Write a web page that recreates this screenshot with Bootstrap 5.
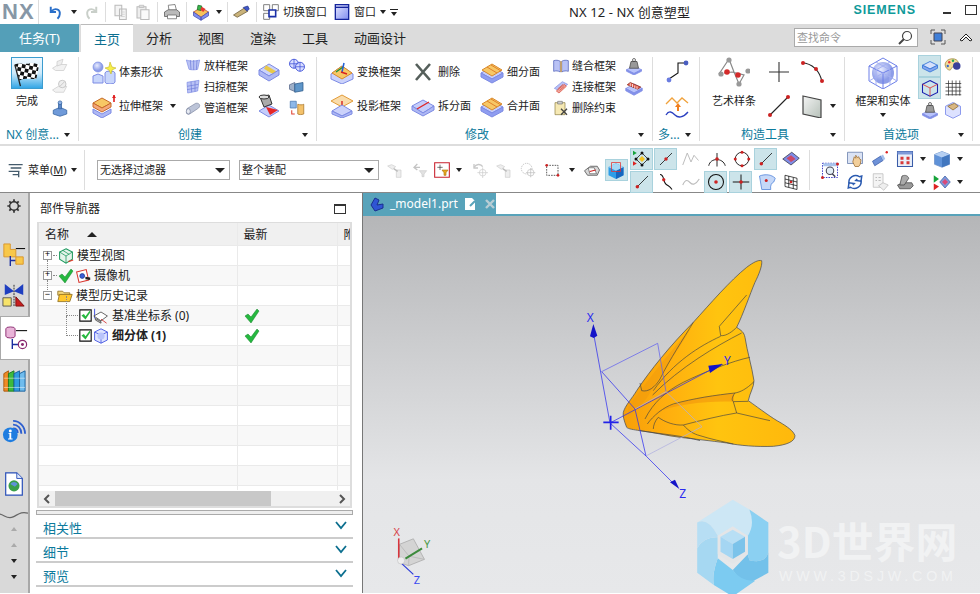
<!DOCTYPE html>
<html lang="zh-CN">
<head>
<meta charset="UTF-8">
<meta name="viewport" content="width=device-width, initial-scale=1.0">
<title>NX 12 - NX 创意塑型</title>
<link rel="stylesheet" href="https://cdn.jsdelivr.net/npm/bootstrap@5.3.0/dist/css/bootstrap.min.css">
<style>
  html, body { height: 594px; overflow: hidden; }
  body { width: 980px; background: #fff; color: #222; font: 11px/16px "Noto Sans", "Noto Sans CJK SC", sans-serif; }
  svg { display: block; flex: none; overflow: visible; }
  .sprite { position: absolute; }
  .ic { width: 24px; height: 24px; }
  .ic-m { width: 18px; height: 18px; }
  .ic-s { width: 16px; height: 16px; }
  .ic-l { width: 32px; height: 32px; }
  .tri { width: 0; height: 0; flex: none; border: 3.5px solid transparent; border-top: 4px solid #222; border-bottom: 0; }
  .tri-up { transform: rotate(180deg); }
  .tri-dim { border-top-color: #aaa; }
  .tri-wide { border-width: 5px 5px 0; }

  /* title bar */
  .title-bar { height: 24px; }
  .nx-logo { width: 39px; padding-left: 2px; font: 700 22px/24px "Liberation Sans", sans-serif; color: #8797a6; letter-spacing: 1px; border-right: 1px solid #ddd; flex: none; }
  .qat { display: grid; padding-left: 4px; grid-template-columns: 26px 10px 23px 6px 26px 18px 10px 20px 8px 22px 14px 2px 26px 4px; align-items: center; justify-items: center; height: 24px; }
  .qat-sep { width: 1px; height: 20px; background: #ddd; }
  .qat-txt { display: flex; align-items: center; gap: 4px; font-size: 11px; color: #222; }
  .qt-a { margin-left: 5px; } .qt-b { margin-left: 7px; }
  .win-title { margin-left: 171px; font-size: 13px; line-height: 24px; letter-spacing: .1px; }
  .siemens { font: 700 12.5px/24px "Liberation Sans", sans-serif; color: #0f9a9a; letter-spacing: .9px; margin-top: -2px; }
  .win-min { width: 8px; height: 2px; background: #333; margin: 12px 14px 0 27px; }
  .win-max { width: 12px; height: 10px; border: 1px solid #333; margin: 5px 3px 0 0; }

  /* tabs */
  .tab-row { height: 28px; background: #dcdcdc; }
  .tab-task { width: 79px; background: #549fb8; color: #fff; text-align: center; font-size: 13px; line-height: 28px; }
  .tab-on { width: 52px; margin-left: 2px; background: #fff; color: #0c6f8f; text-align: center; font-size: 13px; line-height: 28px; border-top: 1px solid #bbb; }
  .tab-plain { margin-left: 26px; font-size: 13px; line-height: 28px; color: #222; }
  .tab-first { margin-left: 13px; }
  .find-box { width: 124px; height: 19px; margin: 4px 12px 0 0; padding-left: 2px; background: #fff; border: 1px solid #aaa; color: #999; font-size: 11px; line-height: 17px; }
  .tab-ico { margin: 5px 12px 0 0; }
  .tab-ico-end { margin: 5px 6px 0 0; }

  /* ribbon */
  .ribbon { height: 94px; border-bottom: 2px solid #ddd; }
  .rb-sep { width: 1px; height: 84px; margin-top: 5px; background: #ddd; flex: none; }
  .rb-grp { flex: none; display: flex; flex-direction: column; }
  .rb-body { display: grid; height: 74px; padding-top: 3px; }
  .rb-col { display: flex; flex-direction: column; }
  .rb-row3 { height: 21px; display: flex; align-items: center; gap: 3px; white-space: nowrap; }
  .rb-row2 { height: 34px; display: flex; align-items: center; gap: 3px; white-space: nowrap; }
  .rb-big { display: flex; flex-direction: column; align-items: center; padding-top: 2px; white-space: nowrap; }
  .rb-big span { margin-top: 4px; }
  .rb-label { height: 18px; margin-top: 1px; display: flex; align-items: center; padding-right: 8px; color: #0c7a9c; font-size: 12px; }
  .rb-label .tri { margin-left: auto; }
  .flag-btn { background: linear-gradient(#eef8ff, #cfeafa 50%, #35a7e6); border: 1px solid #3c9ccf; }

  .g-nx { width: 78px; } .g-nx .rb-body { grid-template-columns: 48px 18px; padding-left: 3px; } .g-nx .rb-label { padding-left: 6px; }
  .g-cr { width: 237px; } .g-cr .rb-body { grid-template-columns: 93px 72px 31px 18px; padding-left: 13px; } .g-cr .rb-label { padding-left: 99px; }
  .g-md { width: 335px; } .g-md .rb-body { grid-template-columns: 81px 69px 73px 72px 18px; padding-left: 13px; } .g-md .rb-label { padding-left: 148px; }
  .g-mu { width: 46px; } .g-mu .rb-body { grid-template-columns: 24px; padding-left: 12px; } .g-mu .rb-label { padding-left: 5px; }
  .g-ct { width: 144px; } .g-ct .rb-body { grid-template-columns: 66px 24px 55px; padding-left: 1px; } .g-ct .rb-label { padding-left: 41px; }
  .g-ct .rb-shift { padding-left: 9px; gap: 6px; }
  .g-pr { width: 127px; } .g-pr .rb-body { grid-template-columns: 70px 23px 21px; padding-left: 3px; } .g-pr .rb-label { padding-left: 38px; }
  .g-pr .rb-big .tri { margin-top: 4px; }
  .g-pr .rb-icons { padding-left: 3px; }
  .rb-toggle { height: 22px; display: flex; align-items: center; justify-content: center; }
  .rb-toggle.on { background: #cce4ea; border: 1px solid #a9d2dd; }

  /* selection bar */
  .sel-bar { height: 47px; border-bottom: 1px solid #888; padding: 2px 0 0 8px; }
  .menu-btn { width: 72px; display: flex; align-items: center; gap: 4px; font-size: 11px; white-space: nowrap; }
  .sel-sep { width: 1px; height: 40px; background: #ddd; flex: none; }
  .sep-a { margin-left: 4px; }
  .sep-b { margin: 0 3px 0 6px; }
  .zoom-ic { margin: 0 3px 0 8px; }
  .fake-select { height: 20px; display: flex; align-items: center; justify-content: space-between; padding: 0 4px 0 2px; border: 1px solid #aaa; font-size: 11px; }
  .fs-a { width: 133px; margin-left: 12px; } .fs-b { width: 140px; margin-left: 9px; }
  .tb-strip { display: grid; margin-left: 4px; grid-template-columns: 24px 26px 17px 18px 24px 23px 26px 22px 17px 24px 24px; align-items: center; justify-items: center; }
  .tb-two { display: grid; margin-left: 2px; grid-template-columns: 24px 24px 26px 25px 25px 25px 24px; grid-auto-rows: 22px; row-gap: 1px; align-self: flex-start; }
  .tb-two-b { grid-template-columns: 25px 26px 24px 12px 26px 10px; margin-left: 0; }
  .tb-cell { display: flex; align-items: center; justify-content: center; }
  .tb-cell.on, .tb-strip .on { background: #cce4ea; border: 1px solid #a9d2dd; width: 23px; height: 22px; }

  /* work area */
  .work { height: 400px; }
  .side-rail { width: 30px; flex: none; background: #d9d9d9; border-right: 2px solid #a8a8a8; }
  .rail-item { height: 40px; display: flex; align-items: center; justify-content: center; }
  .rail-item.on { height: 44px; margin-top: 1px; background: #fff; border: 1px solid #aaa; border-right: 0; margin-right: -2px; }
  .rail-gear { height: 26px; }
  .rail-h42 { height: 42px; }
  .rail-h44 { height: 44px; }
  .rail-wave { height: 12px; margin-top: 3px; }
  .rail-arrow { height: 16px; display: flex; align-items: center; justify-content: center; }

  .nav-panel { width: 332px; flex: none; padding: 0 9px 0 6px; }
  .nav-title { height: 29px; display: flex; align-items: center; justify-content: space-between; padding: 2px 7px 0 4px; font-size: 12px; }
  .max-box { width: 12px; height: 10px; border: 1px solid #333; border-top-width: 2px; }
  .tree-wrap { height: 286px; border: 2px solid #ddd; border-top-width: 1px; margin: 0 1px; overflow: hidden; }
  .tree-scroll { height: 267px; margin-bottom: 1px; overflow: hidden; }
  .tree-tbl { width: 338px; margin: 0; table-layout: fixed; border-collapse: collapse; font-size: 12px; }
  .tree-tbl col:nth-child(1) { width: 198px; } .tree-tbl col:nth-child(2) { width: 100px; } .tree-tbl col:nth-child(3) { width: 40px; }
  .tree-tbl th, .tree-tbl td { height: 20px; padding: 0 0 0 6px; border: 0; border-right: 1px solid #eaeaea; border-bottom: 1px solid #eaeaea; vertical-align: middle; font-weight: 400; white-space: nowrap; background: transparent; box-shadow: none; overflow: hidden; color: #222; }
  .tree-tbl td:first-child { padding-left: 4px; overflow: visible; }
  .tree-tbl th { background: #f0f0f0; height: 21px; line-height: 21px; padding-top: 1px; }
  .tree-tbl tr.alt td { background: #f8f8f8; }
  .tree-cell { display: flex; align-items: center; gap: 1px; height: 19px; }
  .tree-cell svg:last-of-type { margin-right: 2px; }
  .tw-box { position: relative; width: 9px; height: 9px; border: 1px solid #999; background: #fff; display: flex; align-items: center; justify-content: center; font: 9px/7px "Liberation Mono", monospace; color: #000; flex: none; }
  .tw-link::after { content: ""; position: absolute; left: 3px; top: 8px; height: 12px; border-left: 1px dotted #888; }
  .dots { position: relative; width: 4px; border-top: 1px dotted #888; flex: none; }
  .dots-l { width: 12px; }
  .dots-l::before { content: ""; position: absolute; left: 0; bottom: 0; height: 20px; border-left: 1px dotted #888; }
  .ind-2 { margin-left: 23px; }
  .chk-box { width: 13px; height: 13px; }
  .sort-gap { gap: 18px; }
  .tree-hsb { height: 15px; background: #f0f0f0; display: flex; align-items: center; padding: 0 4px; }
  .hsb-thumb { width: 216px; height: 15px; background: #c8c8c8; margin: 0 auto 0 5px; }
  .splitter { height: 5px; margin-top: 2px; border: 1px solid #aaa; background: #eee; }
  .acc-row { height: 24px; display: flex; align-items: flex-end; justify-content: space-between; padding: 0 6px 0 7px; border-bottom: 2px solid #ccc; color: #0c7a9c; font-size: 13px; line-height: 18px; }
  .acc-row svg { margin-bottom: 8px; }

  .view-area { width: 618px; flex: none; border-left: 1px solid #777; }
  .doc-tabs { height: 23px; border-bottom: 2px solid #58a3ba; }
  .doc-tab { width: 133px; height: 21px; background: #58a3ba; color: #fff; display: flex; align-items: center; padding-left: 6px; font: 12px/21px "Noto Sans", sans-serif; }
  .doc-ic { margin-right: 5px; }
  .canvas-svg { width: 617px; height: 377px; }
</style>
</head>
<body>

<!-- icon set -->
<svg class="sprite" width="0" height="0">
  <defs>
    <linearGradient id="gCube" x1="0" y1="0" x2="1" y2="1"><stop offset="0" stop-color="#e4e6ff"/><stop offset="1" stop-color="#7f8df0"/></linearGradient>
    <linearGradient id="gGray" x1="0" y1="0" x2="1" y2="1"><stop offset="0" stop-color="#f4f4f4"/><stop offset="1" stop-color="#b5c0b8"/></linearGradient>
    <radialGradient id="gBall" cx=".4" cy=".35"><stop offset="0" stop-color="#e8ecff"/><stop offset="1" stop-color="#8d9de8"/></radialGradient>
    <linearGradient id="gBody" x1="1" y1="0" x2="0" y2="0"><stop offset="0" stop-color="#ffb80c"/><stop offset=".45" stop-color="#ffc40f"/><stop offset=".75" stop-color="#ffae0e"/><stop offset="1" stop-color="#f79f08"/></linearGradient>
    <linearGradient id="gBack" x1="0" y1="0" x2="0" y2="1"><stop offset="0" stop-color="#b5b6b8"/><stop offset=".7" stop-color="#e4e5e7"/><stop offset="1" stop-color="#e7e8ea"/></linearGradient>
    <pattern id="chk" width="8" height="8" patternUnits="userSpaceOnUse" patternTransform="rotate(12)"><rect width="8" height="8" fill="#fff"/><rect width="4" height="4" fill="#111"/><rect x="4" y="4" width="4" height="4" fill="#111"/></pattern>
  </defs>
  <symbol id="slab-y" viewBox="0 0 24 24"><path d="M1 13l11-6 11 6-11 6z" fill="#c5cdfb" stroke="#7d8be4"/><path d="M1 13v4l11 6 11-6v-4l-11 6z" fill="#8f9df0" stroke="#7d8be4"/><path d="M2 10l10-6 10 6-10 6z" fill="#f7c765" stroke="#d98a2b"/><path d="M7 7l10 6M11 5l10 6" stroke="#e0812a"/></symbol>
  <symbol id="undo" viewBox="0 0 24 24"><path d="M5 5v7h7M6 11c4-5 12-3 11 4 0 2-1 4-3 6" fill="none" stroke="#2a6fc9" stroke-width="2.6"/></symbol>
  <symbol id="redo" viewBox="0 0 24 24"><path d="M19 5v7h-7M18 11c-4-5-12-3-11 4 0 2 1 4 3 6" fill="none" stroke="#c9cfc9" stroke-width="2.6"/></symbol>
  <symbol id="copy-g" viewBox="0 0 24 24"><path d="M4 3h9v14H4zM10 8h9v14h-9z" fill="#f4f4f4" stroke="#bbb" stroke-width="1.4"/><path d="M12 12h5M12 15h5M12 18h5" stroke="#ccc"/></symbol>
  <symbol id="paste-g" viewBox="0 0 24 24"><path d="M4 5h12v15H4z" fill="#eee" stroke="#bbb" stroke-width="1.4"/><path d="M9 9h11v13H9z" fill="#fafafa" stroke="#bbb" stroke-width="1.4"/><path d="M7 3h6v3H7z" fill="#ddd" stroke="#bbb"/></symbol>
  <symbol id="print" viewBox="0 0 24 24"><path d="M7 3l9-1 2 8H8z" fill="#fff" stroke="#666"/><path d="M2 12l5-3h11l4 3v6H2z" fill="#bbb" stroke="#555"/><path d="M6 16h12v5H6z" fill="#fff" stroke="#666"/></symbol>
  <symbol id="paintbox" viewBox="0 0 24 24"><path d="M2 12l10-6 10 6-10 7z" fill="#f6c25c" stroke="#b5462a"/><path d="M2 12v5l10 6v-4zM22 12v5l-10 6v-4z" fill="#7f8df0" stroke="#444fb0"/><path d="M8 3l5 1-1 6-5-1z" fill="#39b54a" stroke="#1c6f2a"/><path d="M13 5l5 3-3 4-4-3z" fill="#e53935"/></symbol>
  <symbol id="wand" viewBox="0 0 24 24"><path d="M2 16l14-9 5 4-14 8z" fill="#c9b27a" stroke="#6a5a36"/><path d="M15 6l6-2 2 4-3 3z" fill="#3f57c9" stroke="#2b3a8a"/></symbol>
  <symbol id="switch-w" viewBox="0 0 24 24"><path d="M1 1h9v9H1zM14 1h9v9h-9zM1 14h9v9H1z" fill="#fff" stroke="#777" stroke-width="1.4"/><path d="M9 9h10v10H9z" fill="#fff" stroke="#1a2fa8" stroke-width="2.4"/></symbol>
  <symbol id="win-w" viewBox="0 0 24 24"><path d="M2 1h20v22H2z" fill="url(#gCube)" stroke="#14249c" stroke-width="2"/><path d="M2 5h20" stroke="#14249c" stroke-width="2"/></symbol>
  <symbol id="slab-g1" viewBox="0 0 24 24"><path d="M2 15l8-5h11l-4 8H6z" fill="#f2f2f2" stroke="#ccc"/><path d="M8 6l8-3-2 7-6 2z" fill="#eee" stroke="#ccc"/></symbol>
  <symbol id="slab-g2" viewBox="0 0 24 24"><path d="M2 16l8-5h11l-4 8H6z" fill="#f2f2f2" stroke="#ccc"/><circle cx="15" cy="8" r="5" fill="#eee" stroke="#bbb"/><path d="M12 11l6-6" stroke="#bbb"/></symbol>
  <symbol id="slab-b" viewBox="0 0 24 24"><path d="M3 15l9-4 9 4v5l-9 3-9-3z" fill="#6f9ad9" stroke="#33629f"/><path d="M10 6h4v7h-4z" fill="#5b87c7" stroke="#33629f"/><circle cx="12" cy="5" r="2.5" fill="#8cb1e6" stroke="#33629f"/></symbol>
  <symbol id="voxel" viewBox="0 0 24 24"><circle cx="6" cy="7" r="5" fill="url(#gBall)" stroke="#6c7fe0" stroke-width=".6"/><path d="M1 16l5-2 5 2v7H1z" fill="#c8d6fb" stroke="#7d8be4"/><path d="M13 13a5 2 0 0 1 10 0v9a5 2 0 0 1-10 0z" fill="#c8d6fb" stroke="#7d8be4"/><path d="M13 8l4-1 1-5 2 5 4 1-4 2-1 4-2-4z" fill="#f7ef4a" stroke="#c4b520" stroke-width=".6"/></symbol>
  <symbol id="extrude" viewBox="0 0 24 24"><path d="M1 9l9-5 9 5-9 5z" fill="#f7c765" stroke="#c76a2a"/><path d="M1 9v4l9 5 9-5V9l-9 5z" fill="#f4a77a" stroke="#c76a2a"/><path d="M1 15l9 5 9-5v4l-9 5-9-5z" fill="#aeb8f4" stroke="#7d8be4"/><path d="M22 1v7" stroke="#e02020" stroke-width="1.6"/><path d="M20 4l2-3 2 3z" fill="#e02020"/></symbol>
  <symbol id="loft" viewBox="0 0 24 24"><path d="M2 3c4 2 14 2 20 0l-3 14c-4 1-9 1-13 0z" fill="#b9c2f5" stroke="#7d8be4"/><path d="M8 3l1 15M13 3v15M18 3l-1 15" stroke="#6c7ad8"/></symbol>
  <symbol id="sweep" viewBox="0 0 24 24"><path d="M3 5l18-3-2 16-15 3z" fill="#b9c2f5" stroke="#7d8be4"/><path d="M3 11l17-3M3 16l16-3M9 4l1 16M15 3v16" stroke="#6c7ad8"/></symbol>
  <symbol id="pipe" viewBox="0 0 24 24"><path d="M3 13l13-8c3-1 6 1 6 3s-1 4-3 5L7 21c-3 1-5 0-5-3z" fill="#bcc4d8" stroke="#7b859f"/><ellipse cx="5" cy="17" rx="3" ry="4" fill="#e8ecf4" stroke="#7b859f"/></symbol>
  <symbol id="panels" viewBox="0 0 24 24"><path d="M2 10l10-6 10 6-10 6z" fill="#cbd2fb" stroke="#7d8be4"/><path d="M8 7l10 6" stroke="#e9c94a" stroke-width="4"/><path d="M2 10v5l10 6 10-6v-5l-10 6z" fill="#aeb8f4" stroke="#7d8be4"/></symbol>
  <symbol id="pour" viewBox="0 0 24 24"><path d="M2 17l10-6 10 6-10 6z" fill="#c5cdfb" stroke="#7d8be4"/><path d="M9 13l12 3-8 5z" fill="#e62727"/><path d="M3 3l9-2 3 9-8 3z" fill="#aaa" stroke="#333"/><ellipse cx="7" cy="3" rx="5" ry="2" fill="#ddd" stroke="#333"/></symbol>
  <symbol id="mesh-b" viewBox="0 0 24 24"><circle cx="8" cy="9" r="6" fill="#d8ddff" stroke="#3f51d8" stroke-width="1.2"/><circle cx="16" cy="13" r="6" fill="#d8ddff" stroke="#3f51d8" stroke-width="1.2"/><path d="M2 9h12M8 3v12M10 13h12M16 7v12" stroke="#3f51d8"/></symbol>
  <symbol id="mirror-b" viewBox="0 0 24 24"><path d="M2 9l7-3v12l-7-3z" fill="#9fb0c8" stroke="#56678a"/><path d="M9 8l11-2v11l-11 2z" fill="#5f96c9" stroke="#2c5a8a"/></symbol>
  <symbol id="mirror-o" viewBox="0 0 24 24"><path d="M3 3h8v9H3z" fill="#8eb8e8" stroke="#4878b0"/><path d="M13 7c3 1 6 1 8 0v13c-3 1-6 1-8 0z" fill="#f4c26b" stroke="#a87426"/><path d="M5 15v5h4" fill="none" stroke="#e04030" stroke-width="1.4"/></symbol>
  <symbol id="transform" viewBox="0 0 24 24"><path d="M1 14l11-8 11 8v5l-11 5-11-5z" fill="#cbd2fb" stroke="#7d8be4"/><path d="M2 13l10-7 10 7-10 6z" fill="#f7c765" stroke="#d98a2b"/><path d="M6 12l7-5" stroke="#1f8f3a" stroke-width="1.5"/><path d="M12 12l2-9" stroke="#1f5fd8" stroke-width="1.5"/><path d="M11 12l6 2" stroke="#d82020" stroke-width="1.5"/></symbol>
  <symbol id="project" viewBox="0 0 24 24"><path d="M1 7l11-6 11 6-11 6z" fill="#f9dcab" stroke="#e29b38"/><path d="M12 7v9" stroke="#d82020" stroke-width="1.4"/><path d="M2 17l10-6 10 6-10 5z" fill="#cbd2fb" stroke="#7d8be4"/><path d="M2 17v3l10 4 10-4v-3l-10 5z" fill="#aeb8f4" stroke="#7d8be4"/></symbol>
  <symbol id="xdel" viewBox="0 0 24 24"><path d="M5 4l14 16M19 4L5 20" stroke="#555f5b" stroke-width="2.6"/></symbol>
  <symbol id="split" viewBox="0 0 24 24"><path d="M1 12l11-6 11 6-11 7z" fill="#c5cdfb" stroke="#7d8be4"/><path d="M1 12v4l11 6 11-6v-4l-11 7z" fill="#aeb8f4" stroke="#7d8be4"/><path d="M6 15l12-7" stroke="#e02525" stroke-width="1.4"/></symbol>
  <symbol id="sew" viewBox="0 0 24 24"><path d="M1 4c3-1 7-1 10 1v16c-3-2-7-2-10-1zM23 4c-3-1-7-1-10 1v16c3-2 7-2 10-1z" fill="#b9c2f5" stroke="#3f51b0"/><path d="M11 5h2v16h-2z" fill="#d9a441"/></symbol>
  <symbol id="bridge" viewBox="0 0 24 24"><path d="M2 14L14 4l8 4-12 10z" fill="#b9c2f5" stroke="#7d8be4"/><path d="M5 18L17 8l3 3-11 10z" fill="#f0a39a" stroke="#d84a3a"/><path d="M7 15l8-7M10 17l7-6" stroke="#d84a3a"/></symbol>
  <symbol id="clipx" viewBox="0 0 24 24"><path d="M3 4h15v18H3z" fill="#f6e9b4" stroke="#8a7a3a"/><path d="M7 2h7v4H7z" fill="#ccc" stroke="#777"/><path d="M12 13l9 9M21 13l-9 9" stroke="#444" stroke-width="2"/></symbol>
  <symbol id="weight" viewBox="0 0 24 24"><path d="M2 17l10-5 10 5-10 5z" fill="#b8c3fb" stroke="#7d8be4"/><path d="M2 17v2l10 5 10-5v-2l-10 5z" fill="#8391ea" stroke="#7d8be4"/><path d="M8 6h8l2 9H6z" fill="#999" stroke="#444"/><circle cx="12" cy="4" r="2" fill="none" stroke="#444"/></symbol>
  <symbol id="blockred" viewBox="0 0 24 24"><path d="M1 14l11-6 11 6-11 6z" fill="#b8c3fb" stroke="#7d8be4"/><path d="M1 14v3l11 6 11-6v-3l-11 6z" fill="#8391ea" stroke="#7d8be4"/><path d="M3 9l14 6 4-3L7 6z" fill="#e25a4a" stroke="#8a2a20"/><path d="M7 7v4M10 8v4M13 10v4M16 11v4" stroke="#fff"/></symbol>
  <symbol id="bentline" viewBox="0 0 24 24"><path d="M4 19l9-6V3h8" fill="none" stroke="#111" stroke-width="1.1"/><circle cx="4" cy="20" r="2.4" fill="#6a7ce0"/><circle cx="21" cy="3" r="2.4" fill="#4a5ec0"/></symbol>
  <symbol id="offset" viewBox="0 0 24 24"><path d="M1 10l6-6 5 5 5-5 6 5" fill="none" stroke="#f0a23c" stroke-width="1.3"/><path d="M1 21c3-5 6-3 9 0s8 3 13-3" fill="none" stroke="#2a3fc0" stroke-width="1.3"/><path d="M12 17v-4h-2l3-4 3 4h-2v4z" fill="#f08020"/></symbol>
  <symbol id="artspline" viewBox="0 0 32 32"><path d="M1 17L11 2l5 13 5 12 5-9L14 15 6 16" fill="none" stroke="#888" stroke-width="1.2"/><g fill="#999"><circle cx="11" cy="3" r="2.6"/><circle cx="3" cy="17" r="2.6"/><circle cx="21" cy="27" r="2.6"/><circle cx="30" cy="14" r="2.6"/></g><circle cx="9" cy="15" r="2.8" fill="#d42b2b"/><circle cx="20" cy="18" r="2.8" fill="#d42b2b"/></symbol>
  <symbol id="plus-k" viewBox="0 0 24 24"><path d="M12 2v20M2 12h20" stroke="#333" stroke-width="1.1"/></symbol>
  <symbol id="arc-r" viewBox="0 0 24 24"><path d="M2 3c10 0 18 8 20 19" fill="none" stroke="#222" stroke-width="1.1"/><circle cx="3" cy="3" r="2" fill="#c22"/><circle cx="16" cy="9" r="2" fill="#c22"/><circle cx="22" cy="21" r="2" fill="#c22"/></symbol>
  <symbol id="line-r" viewBox="0 0 24 24"><path d="M3 21L21 3" stroke="#222" stroke-width="1.1"/><circle cx="3" cy="21" r="2" fill="#c22"/><circle cx="21" cy="3" r="2" fill="#c22"/></symbol>
  <symbol id="plane" viewBox="0 0 24 24"><path d="M3 2l18 4v18L3 20z" fill="url(#gGray)" stroke="#444" stroke-width="1.2"/></symbol>
  <symbol id="bigcube" viewBox="0 0 32 32"><circle cx="16" cy="16" r="11" fill="url(#gBall)"/><path d="M16 1l14 8v15l-14 8-14-8V9z" fill="none" stroke="#6c7fe8"/><path d="M2 9l14 7 14-7M16 16v16" stroke="#6c7fe8" fill="none"/><path d="M9 5l14 8v15M23 5L9 13v15M2 24l14-8 14 8" stroke="#a4b0f2" fill="none"/></symbol>
  <symbol id="tog1" viewBox="0 0 24 24"><path d="M2 11l10-5 10 5-10 5z" fill="#d6e0fb" stroke="#3a78d8" stroke-width="1.2"/><path d="M2 11v4l10 5 10-5v-4l-10 5z" fill="#86a7ef" stroke="#3a78d8" stroke-width="1.2"/></symbol>
  <symbol id="tog2" viewBox="0 0 24 24"><path d="M12 2l10 5v11l-10 5-10-5V7z" fill="none" stroke="#1a1fb0" stroke-width="1.4"/><path d="M2 7l10 5 10-5M12 12v11" fill="none" stroke="#e02020"/></symbol>
  <symbol id="palette" viewBox="0 0 24 24"><path d="M3 6c4-5 14-5 16 1s-4 5-7 6-2 6-6 4S0 10 3 6z" fill="#f2dc9a" stroke="#9a8036"/><circle cx="7" cy="7" r="1.6" fill="#e33"/><circle cx="12" cy="5" r="1.6" fill="#2a5"/><circle cx="5" cy="12" r="1.6" fill="#36c"/><circle cx="17" cy="12" r="5" fill="#3a3f9a"/></symbol>
  <symbol id="gridk" viewBox="0 0 24 24"><path d="M6 2v20M11 2v20M16 2v20M21 2v20M2 6h21M2 11h21M2 16h21M2 21h21" stroke="#333" stroke-width="1"/></symbol>
  <symbol id="wirebox" viewBox="0 0 24 24"><path d="M12 2l10 5v11l-10 5-10-5V7z" fill="#dde2ff" stroke="#6c7fe8"/><path d="M5 7l9-4 5 4-7 5z" fill="#d9b782" stroke="#8a6a30"/></symbol>
  <symbol id="menu-i" viewBox="0 0 24 24"><path d="M1 4h21M4 9h16M1 14h16M7 19h9" stroke="#445b6c" stroke-width="2"/><path d="M16 14v9" stroke="#445b6c" stroke-width="2"/></symbol>
  <symbol id="fil-ghost" viewBox="0 0 24 24"><path d="M3 8h9M8 3L3 8l5 4" fill="none" stroke="#c4c4c4" stroke-width="2"/><path d="M11 13h11l-4 5v4h-3v-4z" fill="#e2e2e2" stroke="#ccc"/></symbol>
  <symbol id="fil-red" viewBox="0 0 24 24"><path d="M1 1h22v22H1z" fill="#fff" stroke="#c8202c" stroke-width="1.6"/><path d="M9 4v8M5 8h8" stroke="#333"/><path d="M12 12h9l-3 4v4h-3v-4z" fill="#e8a820" stroke="#b07a10"/></symbol>
  <symbol id="rot-ghost" viewBox="0 0 24 24"><path d="M3 8c3-5 10-6 13-1" fill="none" stroke="#c8c8c8" stroke-width="2"/><path d="M3 3v6h6" fill="none" stroke="#c8c8c8" stroke-width="2"/><circle cx="16" cy="16" r="5" fill="none" stroke="#c8c8c8"/><path d="M16 8v16M8 16h16" stroke="#c8c8c8"/></symbol>
  <symbol id="link-ghost" viewBox="0 0 24 24"><path d="M1 6l6-2 6 3-5 4zM14 12h7v11h-7z" fill="#eee" stroke="#ccc"/><path d="M10 10l6 4" stroke="#bbb" stroke-width="2"/></symbol>
  <symbol id="hex-ghost" viewBox="0 0 24 24"><circle cx="10" cy="10" r="8" fill="none" stroke="#bbb" stroke-dasharray="2 1.4" stroke-width="1.3"/><circle cx="16" cy="16" r="5" fill="#fff" stroke="#bbb"/><path d="M16 9v14M9 16h14" stroke="#bbb"/></symbol>
  <symbol id="rect-dash" viewBox="0 0 24 24"><path d="M4 5h17v15H4z" fill="none" stroke="#333" stroke-dasharray="2.4 1.6" stroke-width="1.2"/><circle cx="4" cy="5" r="2" fill="#c22"/><circle cx="21" cy="20" r="2" fill="#c22"/></symbol>
  <symbol id="shell-g" viewBox="0 0 24 24"><path d="M2 13l8-6h9l3 5-3 7H6z" fill="#d8d8d8" stroke="#555" stroke-width="1.1"/><path d="M7 9h8l3 8H9z" fill="#fff" stroke="#666"/><path d="M9 14l8-2" stroke="#c22" stroke-width="1.4"/></symbol>
  <symbol id="cube-on" viewBox="0 0 24 24"><path d="M12 3l10 5v11l-10 5-10-5V8z" fill="#2d9de8"/><path d="M12 13l10-5v11l-10 5z" fill="#1766bf"/><path d="M2 8l10-5 10 5-10 5z" fill="#a5d8f6"/><path d="M6 2h12v12H6z" fill="none" stroke="#e23333"/></symbol>
  <symbol id="snap4" viewBox="0 0 24 24"><path d="M4 12l8-8 8 8-8 8z" fill="none" stroke="#222" stroke-width="1.1"/><path d="M8 12l4-4 4 4-4 4z" fill="#f2c220"/><g fill="#111"><circle cx="12" cy="4" r="2"/><circle cx="12" cy="20" r="2"/><circle cx="20" cy="12" r="2"/><circle cx="4" cy="12" r="2"/></g><path d="M0 1l5 3-5 3z" fill="#16a33a"/><path d="M0 15l5 3-5 3z" fill="#d22"/></symbol>
  <symbol id="line-m" viewBox="0 0 24 24"><path d="M3 21L21 3" stroke="#111" stroke-width="1.2"/><circle cx="12" cy="12" r="2.6" fill="#c22"/></symbol>
  <symbol id="line-e" viewBox="0 0 24 24"><path d="M3 21L21 3" stroke="#111" stroke-width="1.2"/><circle cx="5" cy="19" r="2.6" fill="#c22"/></symbol>
  <symbol id="poly-g" viewBox="0 0 24 24"><path d="M1 20L7 4l5 12 4-9 6 7" fill="none" stroke="#bbb" stroke-width="1.3"/></symbol>
  <symbol id="arc-top" viewBox="0 0 24 24"><path d="M1 21C3 10 20 10 23 21M12 4v18" fill="none" stroke="#111" stroke-width="1.2"/><circle cx="12" cy="12" r="2.4" fill="#c22"/></symbol>
  <symbol id="circ4" viewBox="0 0 24 24"><circle cx="12" cy="12" r="9" fill="none" stroke="#111" stroke-width="1.2"/><g fill="#c22"><circle cx="12" cy="3" r="2"/><circle cx="12" cy="21" r="2"/><circle cx="3" cy="12" r="2"/><circle cx="21" cy="12" r="2"/></g></symbol>
  <symbol id="surf-r" viewBox="0 0 24 24"><path d="M1 12L13 3l10 8-11 9z" fill="#7f8de8" stroke="#334"/><path d="M6 11l6-4 6 5-6 4z" fill="#c94a6a"/></symbol>
  <symbol id="scurve" viewBox="0 0 24 24"><path d="M4 2c6 0 4 10 8 13s5 2 8 7" fill="none" stroke="#111" stroke-width="1.4"/><circle cx="9" cy="9" r="2.2" fill="#c22"/></symbol>
  <symbol id="wave-g" viewBox="0 0 24 24"><path d="M1 16c4-9 7-6 10-3s7 3 12-5" fill="none" stroke="#bbb" stroke-width="1.5"/></symbol>
  <symbol id="circ-c" viewBox="0 0 24 24"><circle cx="12" cy="12" r="10" fill="none" stroke="#111" stroke-width="1.4"/><circle cx="12" cy="12" r="2.4" fill="#c22"/></symbol>
  <symbol id="plus-c" viewBox="0 0 24 24"><path d="M12 2v20M1 12h22" stroke="#111" stroke-width="1.3"/><circle cx="12" cy="12" r="2.4" fill="#c22"/></symbol>
  <symbol id="curve-b" viewBox="0 0 24 24"><path d="M2 4c8-3 16-2 21 3l-2 5c-3 1-5 5-4 10H5z" fill="#c5d8f8" stroke="#4a7fd8"/><circle cx="11" cy="10" r="2" fill="#c22"/></symbol>
  <symbol id="grid-p" viewBox="0 0 24 24"><path d="M4 3l16 4v15L4 18z" fill="#fff" stroke="#111"/><path d="M9 4v15M15 6v15M4 8l16 4M4 13l16 4" stroke="#111"/><circle cx="12" cy="12" r="1.8" fill="#c22"/></symbol>
  <symbol id="zoom-f" viewBox="0 0 24 24"><path d="M2 3h20v19H2z" fill="none" stroke="#2b2bc0" stroke-dasharray="2 1.5" stroke-width="1.2"/><path d="M3 3h18v4H3z" fill="#a9c4ec"/><circle cx="12" cy="13" r="5" fill="#e3eef6" stroke="#445" stroke-width="1.4"/><path d="M15 17l4 4" stroke="#445" stroke-width="2"/><circle cx="2" cy="22" r="2" fill="#c22"/><circle cx="22" cy="4" r="2" fill="#c22"/></symbol>
  <symbol id="hand" viewBox="0 0 24 24"><path d="M2 3h20v15H2z" fill="#dbe3f4" stroke="#6279a8"/><path d="M11 9l2 2V7l2 3 2-1 1 3 2 1-1 6-2 3h-5l-3-6z" fill="#f2cf9b" stroke="#9a6b30"/></symbol>
  <symbol id="cyl-a" viewBox="0 0 24 24"><path d="M2 15l11-7 3 6L5 21z" fill="#6e92d8" stroke="#3a5ca8"/><path d="M13 8l3 6 3-2-3-6z" fill="#a5c0ec"/><circle cx="21" cy="3" r="1.6" fill="#d22"/></symbol>
  <symbol id="win-r" viewBox="0 0 24 24"><path d="M2 2h20v20H2z" fill="#e9eff9" stroke="#3a5ca8" stroke-width="1.4"/><path d="M2 2h20v4H2z" fill="#7f9ad8"/><path d="M6 9h4v4H6zM14 9h4v4h-4zM6 15h4v4H6zM14 15h4v4h-4z" fill="#d83a3a"/></symbol>
  <symbol id="box-b" viewBox="0 0 24 24"><path d="M12 2l10 4v13l-10 4-10-4V6z" fill="#5f92d8" stroke="#6c90c8"/><path d="M2 6l10 4 10-4-10-4z" fill="#b5cff2"/><path d="M12 10l10-4v13l-10 4z" fill="#4277bf"/></symbol>
  <symbol id="refresh" viewBox="0 0 24 24"><path d="M4 14a9 9 0 0 1 14-9l3-1-1 7-7-1 2-2" fill="none" stroke="#2a5ab0" stroke-width="2"/><path d="M20 10a9 9 0 0 1-14 9l-3 1 1-7 7 1-2 2" fill="none" stroke="#2a5ab0" stroke-width="2"/></symbol>
  <symbol id="doc-g" viewBox="0 0 24 24"><path d="M3 1h13v18H3z" fill="#f4f4f4" stroke="#bbb"/><path d="M6 6h2M10 6h3M6 10h2M10 10h3" stroke="#aaa"/><path d="M10 17l6-4 7 3-6 7z" fill="#eee" stroke="#bbb"/></symbol>
  <symbol id="scan" viewBox="0 0 24 24"><path d="M2 16l8-3h11l2 4-4 4H5z" fill="#999" stroke="#444"/><path d="M8 4c5-2 8 0 9 3l-6 9H5z" fill="#aaa" stroke="#444"/></symbol>
  <symbol id="diamond" viewBox="0 0 24 24"><path d="M9 12l7-8 7 8-7 8z" fill="#7f9ad8" stroke="#3a5ca8"/><path d="M12 12l4-4 4 4-4 4z" fill="#d94a7a"/><path d="M1 3l7 5-7 5z" fill="#16a33a"/><path d="M1 14l7 4-7 5z" fill="#d22"/></symbol>
  <symbol id="gear" viewBox="0 0 24 24"><circle cx="12" cy="12" r="6.5" fill="none" stroke="#333" stroke-width="2.2"/><g stroke="#333" stroke-width="2.6"><path d="M12 2v4M12 18v4M2 12h4M18 12h4M5 5l3 3M16 16l3 3M19 5l-3 3M8 16l-3 3"/></g></symbol>
  <symbol id="rail-asm" viewBox="0 0 26 26"><path d="M2 1h7v6h6v8H2z" fill="#f8c84a" stroke="#d9962a"/><path d="M15 6h10" stroke="#111" stroke-width="1.2"/><path d="M9 14v11M9 19h6" stroke="#1a2ea0" stroke-width="1.5"/><path d="M15 15h8v8h-8z" fill="#f8c84a" stroke="#d9962a"/></symbol>
  <symbol id="rail-con" viewBox="0 0 26 26"><path d="M3 1l10 8 10-8v12l-10-4-10 4z" fill="#1f3fc0"/><path d="M13 2v24" stroke="#222" stroke-dasharray="2 1"/><path d="M1 16h9v9H1z" fill="#f7e36a" stroke="#555"/><path d="M15 15l9 10h-9z" fill="#c81e1e" stroke="#7a1010"/></symbol>
  <symbol id="rail-part" viewBox="0 0 26 26"><path d="M2 3a5 2 0 0 1 10 0v8a5 2 0 0 1-10 0z" fill="#e8b4d8" stroke="#8a2a70"/><path d="M13 5h12" stroke="#111" stroke-width="1.2"/><path d="M9 14v11M9 20h7" stroke="#1a2ea0" stroke-width="1.5"/><circle cx="20" cy="20" r="4.5" fill="none" stroke="#8a2a70" stroke-width="1.3"/><circle cx="20" cy="20" r="1.6" fill="#8a2a70"/></symbol>
  <symbol id="rail-book" viewBox="0 0 26 26"><path d="M2 5l5-3v22H2z" fill="#f08a24" stroke="#a85a10"/><path d="M7 5l6-3v22H7z" fill="#3dba3d" stroke="#1f7a1f"/><path d="M13 5l6-3v22h-6z" fill="#2f9be0" stroke="#1a5f9a"/><path d="M19 5l6-3v22h-6z" fill="#6fbcee" stroke="#1a5f9a"/><path d="M2 10h23M2 20h23" stroke="#fff" opacity=".5"/></symbol>
  <symbol id="rail-info" viewBox="0 0 26 26"><path d="M12 1c7 0 13 6 13 14M12 5c5 0 9 4 9 10M12 9c3 0 5 2 5 5" fill="none" stroke="#2e5fcf" stroke-width="2"/><circle cx="9" cy="16" r="8" fill="#1f7de0"/><circle cx="9" cy="12" r="1.6" fill="#fff"/><path d="M7 14h3v6h1.5v1h-5v-1H8v-5H7z" fill="#fff"/></symbol>
  <symbol id="rail-doc" viewBox="0 0 26 26"><path d="M4 1h12l6 6v18H4z" fill="#fff" stroke="#2a50b8" stroke-width="1.3"/><path d="M16 1v6h6" fill="#dfe7fb" stroke="#2a50b8"/><circle cx="13" cy="15" r="6" fill="#3aa04a"/><path d="M9 13c2-3 6-3 8 0l-3 3z" fill="#5f92d8"/></symbol>
  <symbol id="rail-wave" viewBox="0 0 30 13"><path d="M0 5c5 1 8 6 14 3s9-6 16-4" fill="none" stroke="#666" stroke-width="1.3"/></symbol>
  <symbol id="t-view" viewBox="0 0 20 20"><path d="M10 1l8 4v9l-8 5-8-5V5z" fill="#e4f4ea" stroke="#1f9a5f" stroke-width="1.3"/><path d="M2 5l8 5 8-5M10 10v9M6 3l8 5" fill="none" stroke="#1f9a5f"/><path d="M13 17l6-2" stroke="#e04030" stroke-width="1.4"/></symbol>
  <symbol id="t-check" viewBox="0 0 16 16"><path d="M1 8l3-2 3 3 6-8 2 2-8 12z" fill="#25b83f" stroke="#14812a" stroke-width=".5"/></symbol>
  <symbol id="t-cam" viewBox="0 0 20 20"><path d="M2 5l12-3 3 13-12 3z" fill="#fff" stroke="#d8342c" stroke-width="1.3"/><circle cx="9" cy="10" r="3" fill="#3a5fd8" stroke="#223a90"/><path d="M13 11l6 1v3l-6-1z" fill="#222"/></symbol>
  <symbol id="t-folder" viewBox="0 0 20 20"><path d="M1 4h6l2 2h7v3H1z" fill="#f3d77c" stroke="#8a6a1a"/><path d="M3 8h16l-3 9H1z" fill="#ffc72e" stroke="#8a6a1a"/></symbol>
  <symbol id="t-box" viewBox="0 0 16 16"><path d="M1 1h14v14H1z" fill="#fff" stroke="#111" stroke-width="1.4"/><path d="M3 8l3-2 2 3 5-7 1 2-6 9z" fill="#25b83f"/></symbol>
  <symbol id="t-csys" viewBox="0 0 20 20"><path d="M2 1v12" stroke="#1a2fd8"/><path d="M1 10l9-5 8 5-8 6z" fill="#fff" stroke="#444"/><path d="M3 13l7 4v2l-7-4z" fill="#ccc" stroke="#444"/><path d="M10 14l7 5" stroke="#d02020"/></symbol>
  <symbol id="t-cube" viewBox="0 0 20 20"><path d="M10 1l8 4v10l-8 4-8-4V5z" fill="#dfe4ff" stroke="#3f51e0" stroke-width="1.1"/><path d="M2 5l8 4 8-4M10 9v10" fill="none" stroke="#3f51e0"/><circle cx="10" cy="10" r="4.5" fill="#b9c4fb"/></symbol>
</svg>

<div class="title-bar d-flex">
  <div class="nx-logo">NX</div>
  <div class="qat">
    <svg class="ic-m"><use href="#undo"/></svg><span class="tri"></span>
    <svg class="ic-m"><use href="#redo"/></svg><span class="qat-sep"></span>
    <svg class="ic-m"><use href="#copy-g"/></svg><svg class="ic-m"><use href="#paste-g"/></svg><span class="qat-sep"></span>
    <svg class="ic-m"><use href="#print"/></svg><span class="qat-sep"></span>
    <svg class="ic-m"><use href="#paintbox"/></svg><span class="tri"></span><span class="qat-sep"></span>
    <svg class="ic-m"><use href="#wand"/></svg><span class="qat-sep"></span>
  </div>
  <div class="qat-txt qt-a"><svg class="ic-s"><use href="#switch-w"/></svg>切换窗口</div>
  <div class="qat-txt qt-b"><svg class="ic-s"><use href="#win-w"/></svg>窗口<span class="tri"></span><svg width="8" height="7" viewBox="0 0 8 7"><path d="M0 .5h8" stroke="#222"/><path d="M1 3h6L4 7z" fill="#222"/></svg></div>
  <div class="win-title">NX 12 - NX 创意塑型</div>
  <div class="siemens ms-auto">SIEMENS</div>
  <div class="win-min"></div>
  <div class="win-max"></div>
</div>

<div class="tab-row d-flex">
  <div class="tab-task">任务(T)</div>
  <div class="tab-on">主页</div>
  <div class="tab-plain tab-first">分析</div>
  <div class="tab-plain">视图</div>
  <div class="tab-plain">渲染</div>
  <div class="tab-plain">工具</div>
  <div class="tab-plain">动画设计</div>
  <div class="find-box d-flex align-items-center justify-content-between ms-auto">查找命令<svg class="ic-s me-1" viewBox="0 0 16 16"><circle cx="10" cy="6" r="4.5" fill="#fff" stroke="#444" stroke-width="1.2"/><path d="M7 9l-5 5" stroke="#444" stroke-width="2"/></svg></div>
  <svg class="ic-s tab-ico" viewBox="0 0 16 16"><path d="M1 1h4M11 1h4M1 15h4M11 15h4M1 1v4M15 1v4M1 11v4M15 11v4" stroke="#555"/><path d="M4 4h8v8H4z" fill="#3f7fd8" stroke="#445"/></svg>
  <svg class="ic-s tab-ico-end" viewBox="0 0 16 16"><path d="M2 11l6-6 6 6-2 1-4-4-4 4z" fill="#fff" stroke="#222"/></svg>
</div>

<div class="ribbon d-flex">
  <div class="rb-grp g-nx">
    <div class="rb-body">
      <div class="rb-big"><svg class="ic-l flag-btn" viewBox="0 0 32 32"><path d="M3 7c6-3 11 1 18-2l8 2-3 15c-6 1-12-1-18 2z" fill="url(#chk)"/><path d="M3 7l6 23" stroke="#222" stroke-width="1.4"/></svg><span>完成</span></div>
      <div class="rb-col">
        <div class="rb-row3"><svg class="ic-m"><use href="#slab-g1"/></svg></div>
        <div class="rb-row3"><svg class="ic-m"><use href="#slab-g2"/></svg></div>
        <div class="rb-row3"><svg class="ic-m"><use href="#slab-b"/></svg></div>
      </div>
    </div>
    <div class="rb-label">NX 创意...<span class="tri"></span></div>
  </div>
  <div class="rb-sep"></div>
  <div class="rb-grp g-cr">
    <div class="rb-body">
      <div class="rb-col">
        <div class="rb-row2"><svg class="ic"><use href="#voxel"/></svg>体素形状</div>
        <div class="rb-row2"><svg class="ic"><use href="#extrude"/></svg>拉伸框架<span class="tri ms-1"></span></div>
      </div>
      <div class="rb-col">
        <div class="rb-row3"><svg class="ic-s"><use href="#loft"/></svg>放样框架</div>
        <div class="rb-row3"><svg class="ic-s"><use href="#sweep"/></svg>扫掠框架</div>
        <div class="rb-row3"><svg class="ic-s"><use href="#pipe"/></svg>管道框架</div>
      </div>
      <div class="rb-col">
        <div class="rb-row2"><svg class="ic"><use href="#panels"/></svg></div>
        <div class="rb-row2"><svg class="ic"><use href="#pour"/></svg></div>
      </div>
      <div class="rb-col">
        <div class="rb-row3"><svg class="ic-m"><use href="#mesh-b"/></svg></div>
        <div class="rb-row3"><svg class="ic-m"><use href="#mirror-b"/></svg></div>
        <div class="rb-row3"><svg class="ic-m"><use href="#mirror-o"/></svg></div>
      </div>
    </div>
    <div class="rb-label">创建<span class="tri"></span></div>
  </div>
  <div class="rb-sep"></div>
  <div class="rb-grp g-md">
    <div class="rb-body">
      <div class="rb-col">
        <div class="rb-row2"><svg class="ic"><use href="#transform"/></svg>变换框架</div>
        <div class="rb-row2"><svg class="ic"><use href="#project"/></svg>投影框架</div>
      </div>
      <div class="rb-col">
        <div class="rb-row2"><svg class="ic"><use href="#xdel"/></svg>删除</div>
        <div class="rb-row2"><svg class="ic"><use href="#split"/></svg>拆分面</div>
      </div>
      <div class="rb-col">
        <div class="rb-row2"><svg class="ic"><use href="#slab-y"/></svg>细分面</div>
        <div class="rb-row2"><svg class="ic"><use href="#slab-y"/></svg>合并面</div>
      </div>
      <div class="rb-col">
        <div class="rb-row3"><svg class="ic-s"><use href="#sew"/></svg>缝合框架</div>
        <div class="rb-row3"><svg class="ic-s"><use href="#bridge"/></svg>连接框架</div>
        <div class="rb-row3"><svg class="ic-s"><use href="#clipx"/></svg>删除约束</div>
      </div>
      <div class="rb-col">
        <div class="rb-row3"><svg class="ic-m"><use href="#weight"/></svg></div>
        <div class="rb-row3"><svg class="ic-m"><use href="#blockred"/></svg></div>
      </div>
    </div>
    <div class="rb-label">修改<span class="tri"></span></div>
  </div>
  <div class="rb-sep"></div>
  <div class="rb-grp g-mu">
    <div class="rb-body">
      <div class="rb-col">
        <div class="rb-row2"><svg class="ic"><use href="#bentline"/></svg></div>
        <div class="rb-row2"><svg class="ic"><use href="#offset"/></svg></div>
      </div>
    </div>
    <div class="rb-label">多...<span class="tri"></span></div>
  </div>
  <div class="rb-sep"></div>
  <div class="rb-grp g-ct">
    <div class="rb-body">
      <div class="rb-big"><svg class="ic-l"><use href="#artspline"/></svg><span>艺术样条</span></div>
      <div class="rb-col">
        <div class="rb-row2"><svg class="ic"><use href="#plus-k"/></svg></div>
        <div class="rb-row2"><svg class="ic"><use href="#line-r"/></svg></div>
      </div>
      <div class="rb-col">
        <div class="rb-row2 rb-shift"><svg class="ic"><use href="#arc-r"/></svg></div>
        <div class="rb-row2 rb-shift"><svg class="ic"><use href="#plane"/></svg><span class="tri"></span></div>
      </div>
    </div>
    <div class="rb-label">构造工具<span class="tri"></span></div>
  </div>
  <div class="rb-sep"></div>
  <div class="rb-grp g-pr">
    <div class="rb-body">
      <div class="rb-big"><svg class="ic-l"><use href="#bigcube"/></svg><span>框架和实体</span><span class="tri"></span></div>
      <div class="rb-col">
        <div class="rb-toggle on"><svg class="ic-m"><use href="#tog1"/></svg></div>
        <div class="rb-toggle on"><svg class="ic-m"><use href="#tog2"/></svg></div>
        <div class="rb-toggle"><svg class="ic-m"><use href="#weight"/></svg></div>
      </div>
      <div class="rb-col rb-icons">
        <div class="rb-toggle"><svg class="ic-m"><use href="#palette"/></svg></div>
        <div class="rb-toggle"><svg class="ic-m"><use href="#gridk"/></svg></div>
        <div class="rb-toggle"><svg class="ic-m"><use href="#wirebox"/></svg></div>
      </div>
    </div>
    <div class="rb-label">首选项<span class="tri"></span></div>
  </div>
  <div class="rb-sep"></div>
</div>

<div class="sel-bar d-flex align-items-center">
  <div class="menu-btn"><svg class="ic-s"><use href="#menu-i"/></svg><span>菜单(<u>M</u>)</span><span class="tri"></span></div>
  <div class="sel-sep sep-a"></div>
  <div class="fake-select fs-a">无选择过滤器<span class="tri tri-wide"></span></div>
  <div class="fake-select fs-b">整个装配<span class="tri tri-wide"></span></div>
  <div class="tb-strip">
    <svg class="ic-s"><use href="#link-ghost"/></svg>
    <svg class="ic-s"><use href="#fil-ghost"/></svg>
    <svg class="ic-s"><use href="#fil-red"/></svg>
    <span class="tri"></span>
    <svg class="ic-s"><use href="#rot-ghost"/></svg>
    <svg class="ic-s"><use href="#link-ghost"/></svg>
    <svg class="ic-s"><use href="#hex-ghost"/></svg>
    <svg class="ic-s"><use href="#rect-dash"/></svg>
    <span class="tri"></span>
    <svg class="ic-m"><use href="#shell-g"/></svg>
    <div class="tb-cell on"><svg class="ic-m"><use href="#cube-on"/></svg></div>
  </div>
  <div class="tb-two">
    <div class="tb-cell on"><svg class="ic-m"><use href="#snap4"/></svg></div>
    <div class="tb-cell on"><svg class="ic-s"><use href="#line-m"/></svg></div>
    <div class="tb-cell"><svg class="ic-m"><use href="#poly-g"/></svg></div>
    <div class="tb-cell"><svg class="ic-m"><use href="#arc-top"/></svg></div>
    <div class="tb-cell"><svg class="ic-m"><use href="#circ4"/></svg></div>
    <div class="tb-cell on"><svg class="ic-s"><use href="#line-e"/></svg></div>
    <div class="tb-cell"><svg class="ic-m"><use href="#surf-r"/></svg></div>
    <div class="tb-cell on"><svg class="ic-s"><use href="#line-e"/></svg></div>
    <div class="tb-cell"><svg class="ic-m"><use href="#scurve"/></svg></div>
    <div class="tb-cell"><svg class="ic-m"><use href="#wave-g"/></svg></div>
    <div class="tb-cell on"><svg class="ic-m"><use href="#circ-c"/></svg></div>
    <div class="tb-cell on"><svg class="ic-m"><use href="#plus-c"/></svg></div>
    <div class="tb-cell"><svg class="ic-m"><use href="#curve-b"/></svg></div>
    <div class="tb-cell"><svg class="ic-m"><use href="#grid-p"/></svg></div>
  </div>
  <div class="sel-sep sep-b"></div>
  <svg class="ic-m zoom-ic"><use href="#zoom-f"/></svg>
  <div class="tb-two tb-two-b">
    <div class="tb-cell"><svg class="ic-m"><use href="#hand"/></svg></div>
    <div class="tb-cell"><svg class="ic-m"><use href="#cyl-a"/></svg></div>
    <div class="tb-cell"><svg class="ic-m"><use href="#win-r"/></svg></div>
    <div class="tb-cell"><span class="tri"></span></div>
    <div class="tb-cell"><svg class="ic-m"><use href="#box-b"/></svg></div>
    <div class="tb-cell"><span class="tri"></span></div>
    <div class="tb-cell"><svg class="ic-m"><use href="#refresh"/></svg></div>
    <div class="tb-cell"><svg class="ic-m"><use href="#doc-g"/></svg></div>
    <div class="tb-cell"><svg class="ic-m"><use href="#scan"/></svg></div>
    <div class="tb-cell"><span class="tri"></span></div>
    <div class="tb-cell"><svg class="ic-m"><use href="#diamond"/></svg></div>
    <div class="tb-cell"><span class="tri"></span></div>
  </div>
</div>

<div class="work d-flex">
  <div class="side-rail">
    <div class="rail-item rail-gear"><svg class="ic-s"><use href="#gear"/></svg></div>
    <div class="rail-item mt-3"><svg class="ic" viewBox="0 0 26 26"><use href="#rail-asm"/></svg></div>
    <div class="rail-item"><svg class="ic" viewBox="0 0 26 26"><use href="#rail-con"/></svg></div>
    <div class="rail-item on"><svg class="ic" viewBox="0 0 26 26"><use href="#rail-part"/></svg></div>
    <div class="rail-item rail-h42"><svg class="ic" viewBox="0 0 26 26"><use href="#rail-book"/></svg></div>
    <div class="rail-item rail-h44 mt-2"><svg class="ic" viewBox="0 0 26 26"><use href="#rail-info"/></svg></div>
    <div class="rail-item rail-h44 mt-2"><svg class="ic" viewBox="0 0 26 26"><use href="#rail-doc"/></svg></div>
    <div class="rail-wave"><svg width="28" height="13"><use href="#rail-wave"/></svg></div>
    <div class="rail-arrow"><span class="tri tri-up tri-dim"></span></div>
    <div class="rail-arrow"><span class="tri tri-up tri-dim"></span></div>
    <div class="rail-arrow"><span class="tri"></span></div>
    <div class="rail-arrow"><span class="tri"></span></div>
  </div>

  <div class="nav-panel">
    <div class="nav-title">部件导航器<div class="max-box"></div></div>
    <div class="tree-wrap">
      <div class="tree-scroll">
        <table class="table tree-tbl">
          <colgroup><col><col><col></colgroup>
          <thead><tr><th><div class="d-flex align-items-center sort-gap">名称<span class="tri tri-wide tri-up"></span></div></th><th>最新</th><th>附</th></tr></thead>
          <tbody>
            <tr><td><div class="tree-cell"><span class="tw-box tw-link">+</span><span class="dots"></span><svg class="ic-s"><use href="#t-view"/></svg>模型视图</div></td><td></td><td></td></tr>
            <tr class="alt"><td><div class="tree-cell"><span class="tw-box tw-link">+</span><span class="dots"></span><svg class="ic-s"><use href="#t-check"/></svg><svg class="ic-s"><use href="#t-cam"/></svg>摄像机</div></td><td></td><td></td></tr>
            <tr><td><div class="tree-cell"><span class="tw-box">−</span><svg class="ic-s ms-1"><use href="#t-folder"/></svg>模型历史记录</div></td><td></td><td></td></tr>
            <tr class="alt"><td><div class="tree-cell ind-2"><span class="dots dots-l"></span><svg class="chk-box"><use href="#t-box"/></svg><svg class="ic-s"><use href="#t-csys"/></svg>基准坐标系 (0)</div></td><td><svg class="ic-s"><use href="#t-check"/></svg></td><td></td></tr>
            <tr><td><div class="tree-cell ind-2 fw-bold"><span class="dots dots-l"></span><svg class="chk-box"><use href="#t-box"/></svg><svg class="ic-s"><use href="#t-cube"/></svg>细分体 (1)</div></td><td><svg class="ic-s"><use href="#t-check"/></svg></td><td></td></tr>
            <tr class="alt"><td></td><td></td><td></td></tr>
            <tr><td></td><td></td><td></td></tr>
            <tr class="alt"><td></td><td></td><td></td></tr>
            <tr><td></td><td></td><td></td></tr>
            <tr class="alt"><td></td><td></td><td></td></tr>
            <tr><td></td><td></td><td></td></tr>
            <tr class="alt"><td></td><td></td><td></td></tr>
            <tr><td></td><td></td><td></td></tr>
          </tbody>
        </table>
      </div>
      <div class="tree-hsb">
        <svg width="7" height="10" viewBox="0 0 7 10"><path d="M6 1L2 5l4 4" fill="none" stroke="#555" stroke-width="2"/></svg>
        <div class="hsb-thumb"></div>
        <svg width="7" height="10" viewBox="0 0 7 10"><path d="M1 1l4 4-4 4" fill="none" stroke="#555" stroke-width="2"/></svg>
      </div>
    </div>
    <div class="splitter"></div>
    <div class="acc-row">相关性<svg width="12" height="8" viewBox="0 0 12 8"><path d="M1 1l5 6 5-6" fill="none" stroke="#0c6f8f" stroke-width="1.8"/></svg></div>
    <div class="acc-row">细节<svg width="12" height="8" viewBox="0 0 12 8"><path d="M1 1l5 6 5-6" fill="none" stroke="#0c6f8f" stroke-width="1.8"/></svg></div>
    <div class="acc-row">预览<svg width="12" height="8" viewBox="0 0 12 8"><path d="M1 1l5 6 5-6" fill="none" stroke="#0c6f8f" stroke-width="1.8"/></svg></div>
  </div>

  <div class="view-area">
    <div class="doc-tabs">
      <div class="doc-tab"><svg class="ic-s doc-ic" viewBox="0 0 16 16"><path d="M2 9l4-7 4 2-2 5 6-1v4l-8 3z" fill="#2f55d4" stroke="#1a2f90"/></svg>_model1.prt<svg class="ic-s ms-1" viewBox="0 0 16 16"><path d="M3 2h7l3 3v9H3z" fill="#fff"/><path d="M8 10l5-5" stroke="#58a3ba" stroke-width="2"/></svg><svg class="ic-s ms-1" viewBox="0 0 16 16"><path d="M4 4l8 8M12 4l-8 8" stroke="#b8cdd4" stroke-width="2.4"/></svg></div>
    </div>
    <svg class="canvas-svg" viewBox="363 217 617 377">
      <rect x="363" y="217" width="617" height="377" fill="url(#gBack)"/>

      <!-- watermark -->
      <g transform="translate(360 490) scale(.3953)">
        <path d="M853 85L943 27l42 25q15 38 5 73l-47-30-38 23q-25-48-52-33z" fill="#cde7f5"/>
        <path d="M985 52l48 33v75q-8 30-48 20l-4-15v-46q19-29 4-67z" fill="#8bd0f2"/>
        <path d="M1033 160v52l-43 23q-30 0-47-30l38-40 4 15q40 10 48-20z" fill="#73c1ea"/>
        <path d="M943 205q22 30 57 27l-57 40-48-29q-5-28 10-68z" fill="#7ccbf1"/>
        <path d="M853 212v-62q17-30 52-28v53q-15 40-10 68z" fill="#a6d8f2"/>
        <path d="M853 85q27-15 52 33l0 4q-35-2-52 28z" fill="#b7def4"/>
        <path d="M943 95l38 24v46l-38 24-38-24v-46z" fill="#e4e5e7"/>
        <path d="M943 103l31 18-31 18-31-18z" fill="#b8dff5"/>
        <path d="M912 121l31 18v38l-31-18z" fill="#a5d6f3"/>
        <path d="M974 121l-31 18v38l31-18z" fill="#7cc3ea"/>
        <text x="1055" y="175" font-family="Noto Sans CJK SC, sans-serif" font-weight="700" font-size="106" fill="#f1f2f3">3D世界网</text>
        <text x="1060" y="232" font-family="Liberation Sans, sans-serif" font-size="36" textLength="440" fill="#f1f2f3">WWW.3DSJW.COM</text>
      </g>

      <!-- part -->
      <g transform="translate(560 240) scale(.3333)">
        <path d="M605 65C608 80 595 110 585 130C570 165 550 225 530 265C545 275 552 280 555 295C562 340 575 380 582 425C582 445 570 460 565 485C600 510 640 540 660 550C680 562 700 575 705 590C705 608 680 618 640 622C590 624 540 620 500 612C450 605 400 600 360 595C320 590 280 580 240 575C220 572 205 570 200 565C192 545 188 530 190 520C195 500 215 480 230 455C270 395 330 320 400 250C450 195 510 125 560 85C580 70 595 62 605 65Z" fill="url(#gBody)" stroke="#555" stroke-width="2.4"/>
        <path d="M290 520C340 490 440 468 522 462L522 488C440 485 350 495 290 520Z" fill="#f0920d" opacity=".55"/>
        <path d="M205 505C250 440 320 350 395 265C350 340 300 410 265 470C245 500 225 520 205 530Z" fill="#f09a0c" opacity=".55"/>
        <g fill="none" stroke="#444" stroke-width="2">
          <path d="M560 168L478 262L482 290C500 292 520 275 530 265"/>
          <path d="M482 292C420 320 340 370 280 455"/>
          <path d="M545 282C470 320 360 385 278 468"/>
          <path d="M400 250C370 300 330 360 300 420C285 445 265 460 245 455L240 432"/>
          <path d="M570 355C520 365 430 400 370 430C320 455 280 490 255 540"/>
          <path d="M582 428C560 450 540 460 525 462C470 468 400 478 340 495C310 505 280 530 262 555"/>
          <path d="M525 462C515 475 515 485 520 488L565 487M520 488L530 522L630 545"/>
          <path d="M530 522C480 530 420 545 370 558C345 560 315 550 295 535C285 545 280 560 280 570"/>
          <path d="M370 558C385 575 400 585 420 590C450 600 490 608 520 615"/>
          <path d="M240 575C300 585 370 590 420 605"/>
        </g>
      </g>

      <!-- datum csys -->
      <g transform="translate(560 240) scale(.3333)">
        <g fill="none" stroke-width="2.2">
          <path d="M100 280L150 552M150 552L485 375M150 552L258 651L345 738" stroke="#2c2cf0"/>
          <path d="M125 398L293 313L318 458" stroke="#6060ee"/>
          <path d="M125 398L225 510L258 651" stroke="#2c2cf0"/>
          <path d="M318 458L225 510M318 458L426 563L258 651" stroke="#b0b0e0"/>
          <path d="M130 550H176M152 530V572" stroke="#2222e8" stroke-width="5"/>
        </g>
        <path d="M100 255L90 292L101 297L112 290Z M490 375L445 380L450 402Z M358 750L330 730L345 722Z" fill="#1414c8"/>
        <text x="80" y="250" font-family="Noto Sans, sans-serif" font-size="36" fill="#2a2af0">X</text>
        <text x="492" y="378" font-family="Noto Sans, sans-serif" font-size="36" fill="#2a2af0">Y</text>
        <text x="358" y="778" font-family="Noto Sans, sans-serif" font-size="36" fill="#2a2af0">Z</text>
      </g>

      <!-- view triad -->
      <g transform="translate(360 490) scale(.3953)">
        <path d="M100 140l35-14 28 52-40 16-24-8z" fill="#d4d4d4" stroke="#aaa" stroke-width="2"/>
        <path d="M100 140l24 30 39 8M124 170l-1 24" fill="none" stroke="#b5b5b5" stroke-width="2"/>
        <path d="M98 180V125" stroke="#d8343c" stroke-width="4"/>
        <path d="M115 176l42-26" stroke="#3c8a3c" stroke-width="5"/>
        <path d="M105 188l30 28" stroke="#2a3ad8" stroke-width="3"/>
        <circle cx="104" cy="181" r="9" fill="#eee" stroke="#aaa"/>
        <text x="85" y="118" font-family="Noto Sans, sans-serif" font-size="28" fill="#d8444a">X</text>
        <text x="162" y="150" font-family="Noto Sans, sans-serif" font-size="28" fill="#4a9a4a">Y</text>
        <text x="136" y="240" font-family="Noto Sans, sans-serif" font-size="28" fill="#3a4af0">Z</text>
      </g>
    </svg>
  </div>
</div>

<script src="https://cdn.jsdelivr.net/npm/bootstrap@5.3.0/dist/js/bootstrap.bundle.min.js"></script>
</body>
</html>
